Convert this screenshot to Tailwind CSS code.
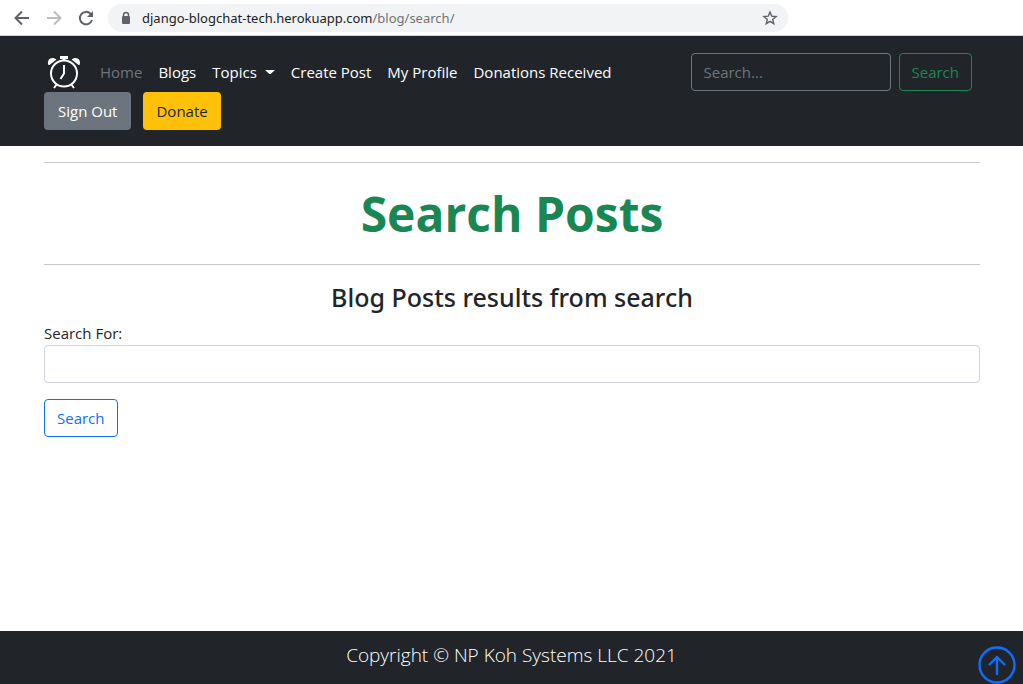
<!DOCTYPE html>
<html lang="en">
<head>
<meta charset="utf-8">
<meta name="viewport" content="width=device-width, initial-scale=1">
<title>Search Posts</title>
<script src="https://cdn.jsdelivr.net/npm/@tailwindcss/browser@4"></script>
</head>
<body class="flex min-h-screen flex-col bg-white font-['Open_Sans','Noto_Sans',sans-serif] text-[15px] leading-6 text-[#212529]">

<div class="flex h-9 items-center border-b border-[#d5d7da] bg-white pl-3">
  <button type="button" aria-label="Back" class="flex w-8 shrink-0 pl-0.5 text-[#5f6368]">
    <svg class="size-4" viewBox="0 0 16 16" fill="none" stroke="currentColor" stroke-width="2"><path d="M15 8H2M8 1.500 1.500 8 8 14.500"/></svg>
  </button>
  <button type="button" aria-label="Forward" class="flex w-8 shrink-0 pl-0.5 text-[#babcbe]">
    <svg class="size-4" viewBox="0 0 16 16" fill="none" stroke="currentColor" stroke-width="2"><path d="M1 8h13M8 1.500 14.500 8 8 14.500"/></svg>
  </button>
  <button type="button" aria-label="Reload" class="flex w-8 shrink-0 pl-0.5 text-[#5f6368]">
    <svg class="size-4" viewBox="0 0 16 16" fill="none"><path d="M14 10A6.200 6.200 0 1 1 12.600 3.800L14 5.200" stroke="currentColor" stroke-width="2"/><path d="M15 1v6H9z" fill="currentColor"/></svg>
  </button>
  <div class="flex h-7 w-[680px] items-center rounded-full bg-[#f1f3f4] pr-2.5 pl-3 text-[#5f6368]">
    <svg class="mr-2 h-4 w-3 shrink-0" viewBox="0 0 12 16"><rect x="2" y="6" width="8" height="8" rx="1" fill="currentColor"/><path d="M3.500 6.500V5a2.500 2.500 0 0 1 5 0v1.500" fill="none" stroke="currentColor" stroke-width="1.500"/></svg>
    <p class="flex-1 pl-0.5 font-['Noto_Sans',sans-serif] text-[13px] text-[#6f7377]"><span class="text-[#202124]">django-blogchat-tech.herokuapp.com</span>/blog/search/</p>
    <button type="button" aria-label="Bookmark this page"><svg class="block size-4" viewBox="0 0 16 16" fill="none" stroke="currentColor" stroke-width="1.400"><path d="m8 2 1.700 4.100 4.400.4-3.400 2.900 1.100 4.300L8 11.400l-3.800 2.300 1.100-4.300-3.400-2.900 4.400-.4z"/></svg></button>
  </div>
</div>

<header class="bg-[#212529] py-4 text-white">
  <div class="w-full pr-[43px] pl-11">
    <div class="flex h-10 items-center">
      <a href="#" aria-label="Blog home" class="mr-4 shrink-0">
        <svg class="block size-10" viewBox="0 0 40 40" fill="none" stroke="white">
          <circle cx="20" cy="21.500" r="13" stroke-width="2"/>
          <path d="M20 13v8.500L16.500 27" stroke-width="2"/>
          <path d="M20 5v3" stroke-width="3"/>
          <path d="M16 4h8v3h-8zM4.500 13C2 7.500 8 3.500 12.500 7.500L5.500 13zM35.500 13C38 7.500 32 3.500 27.500 7.500l7 5.500z" fill="white" stroke="none"/>
          <path d="m13 32-3 4M27 32l3 4" stroke-width="2"/>
        </svg>
      </a>
      <nav class="flex items-center gap-4 whitespace-nowrap">
        <a href="#" class="text-[#6c757d]">Home</a>
        <a href="#">Blogs</a>
        <a href="#" class="flex items-center gap-2">Topics
          <svg class="h-1 w-2.5" viewBox="0 0 10 4" fill="currentColor"><path d="M0 0h10L5 4.500z"/></svg></a>
        <a href="#">Create Post</a>
        <a href="#">My Profile</a>
        <a href="#">Donations Received</a>
      </nav>
      <form class="mr-2 ml-auto flex items-center gap-2">
        <input type="search" aria-label="Search posts" placeholder="Search..." class="h-[38px] w-[200px] rounded border border-[#6c757d] bg-transparent px-3 placeholder:text-[#6c757d]">
        <button type="button" class="h-[38px] rounded border border-[#198754] px-3 text-[#198754]">Search</button>
      </form>
    </div>
    <div class="flex gap-3">
      <button type="button" class="h-[38px] rounded bg-[#6c757d] px-3.5">Sign Out</button>
      <button type="button" class="h-[38px] rounded bg-[#ffc107] px-[13px] text-[#212529]">Donate</button>
    </div>
  </div>
</header>

<main class="flex-1 pt-4 pr-[43px] pl-11">
  <hr class="border-[#c8c9ca]">
  <h1 class="pt-5 pb-5 text-center text-[48px] leading-[61px] font-bold text-[#198754]">Search Posts</h1>
  <hr class="border-[#c8c9ca]">
  <h2 class="mt-4 mb-2 text-center font-['Noto_Sans',sans-serif] text-[25px] leading-8 font-medium">Blog Posts results from search</h2>
  <form>
    <label for="search-for" class="block">Search For:</label>
    <input id="search-for" type="text" class="block h-[38px] w-full rounded border border-[#ced4da] bg-white px-3">
    <button type="button" class="mt-4 h-[38px] rounded border border-[#0d6efd] px-3 text-[#0d6efd]">Search</button>
  </form>
</main>

<footer class="relative h-[53px] bg-[#212529] pt-3 text-center text-[19px] leading-6 font-light text-white">
  <p>Copyright © NP Koh Systems LLC 2021</p>
  <a href="#" aria-label="Back to top" class="absolute right-[7px] bottom-0 text-[#0d6efd]">
    <svg class="block size-[38px]" viewBox="0 0 38 38" fill="none" stroke="currentColor" stroke-width="2.400" stroke-linecap="round" stroke-linejoin="round"><circle cx="19" cy="19" r="17.500"/><path d="M19 28V11M11.500 18.500 19 11l7.500 7.500"/></svg>
  </a>
</footer>
</body>
</html>
